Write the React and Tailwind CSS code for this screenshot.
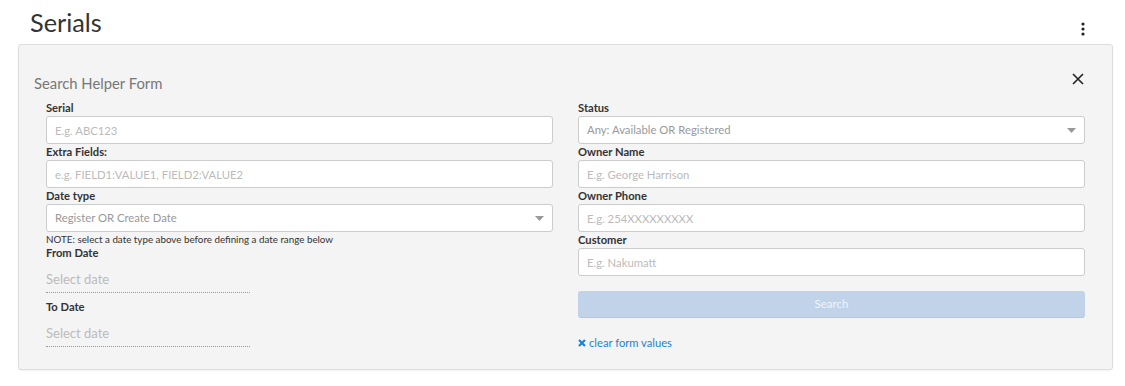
import React from 'react';

function Field({ label, placeholder }) {
  return (
    <div>
      <label className="block h-[16px] text-[11.2px] font-bold leading-[16px] text-[#333]">{label}</label>
      <input
        placeholder={placeholder}
        className="block h-[28px] w-full rounded-[3px] border border-[#ccc] bg-white px-[8px] text-[11.3px] text-[#333] outline-none placeholder:text-[#bbb]"
      />
    </div>
  );
}

function SelectField({ label, value }) {
  return (
    <div>
      <label className="block h-[16px] text-[11.2px] font-bold leading-[16px] text-[#333]">{label}</label>
      <div className="flex h-[28px] w-full items-center justify-between rounded-[3px] border border-[#ccc] bg-white pl-[8px] pr-[8px] text-[11.3px] text-[#999]">
        <span>{value}</span>
        <svg width="9" height="5" viewBox="0 0 9 5">
          <path d="M0 0 L9 0 L4.5 5 Z" fill="#999" />
        </svg>
      </div>
    </div>
  );
}

function DateField({ label, first }) {
  return (
    <div className={first ? '' : 'mt-[7px]'}>
      <label className="block h-[14px] text-[11.2px] font-bold leading-[14px] text-[#333]">{label}</label>
      <div className="w-[204px] border-b border-dotted border-[#999] pb-[3px] pt-[9px] text-[13px] leading-[20px] text-[#bbb]">
        Select date
      </div>
    </div>
  );
}

export default function App() {
  return (
    <div className="min-h-screen bg-white font-['Lato','Noto_Sans',sans-serif]">
      <div className="flex h-[44px] items-start justify-between pl-[30px] pr-[40px] pt-[7px]">
        <h1 className="text-[25.3px] leading-[30px] text-[#333]">Serials</h1>
        <svg width="4" height="14" viewBox="0 0 4 14" className="mt-[15px]">
          <circle cx="2" cy="2" r="1.6" fill="#222" />
          <circle cx="2" cy="7" r="1.6" fill="#222" />
          <circle cx="2" cy="12" r="1.6" fill="#222" />
        </svg>
      </div>

      <div className="ml-[18px] w-[1095px] rounded-[3px] border border-[#ddd] bg-[#f4f4f4] pb-[18px] pt-[28px] shadow-[0_1px_2px_rgba(0,0,0,0.05)]">
        <div className="flex items-start justify-between pl-[15px] pr-[28px]">
          <h2 className="text-[14.8px] leading-[20px] text-[#777]">Search Helper Form</h2>
          <svg width="12" height="12" viewBox="0 0 12 12">
            <path d="M1 1 L11 11 M11 1 L1 11" stroke="#222" strokeWidth="1.6" />
          </svg>
        </div>

        <div className="mt-[7px] grid grid-cols-2 gap-x-[25px] px-[27px]">
          <div className="flex flex-col">
            <Field label="Serial" placeholder="E.g. ABC123" />
            <Field label="Extra Fields:" placeholder="e.g. FIELD1:VALUE1, FIELD2:VALUE2" />
            <SelectField label="Date type" value="Register OR Create Date" />
            <p className="h-[14px] text-[9.8px] leading-[14px] text-[#333]">
              NOTE: select a date type above before defining a date range below
            </p>
            <DateField label="From Date" first />
            <DateField label="To Date" />
          </div>

          <div className="flex flex-col">
            <SelectField label="Status" value="Any: Available OR Registered" />
            <Field label="Owner Name" placeholder="E.g. George Harrison" />
            <Field label="Owner Phone" placeholder="E.g. 254XXXXXXXXX" />
            <Field label="Customer" placeholder="E.g. Nakumatt" />
            <button className="mt-[15px] h-[27px] w-full rounded-[3px] border-b border-[#b3c7e0] bg-[#c1d3e9] text-[11.5px] text-[#eef3fa]">
              Search
            </button>
            <a className="mt-[17px] flex items-center gap-[3px] text-[11.2px] leading-[16px] text-[#1a84d8]">
              <svg width="8" height="8" viewBox="0 0 8 8">
                <path d="M1 1 L7 7 M7 1 L1 7" stroke="#1a84d8" strokeWidth="2.2" />
              </svg>
              clear form values
            </a>
          </div>
        </div>
      </div>
    </div>
  );
}
